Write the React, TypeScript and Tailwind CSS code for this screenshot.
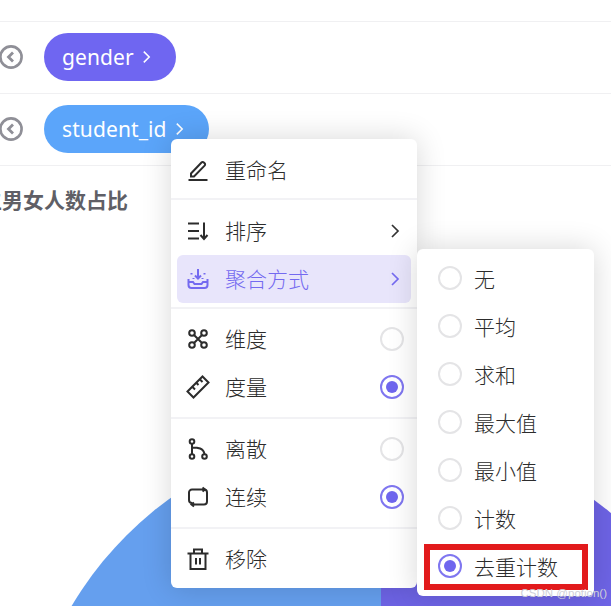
import { ReactNode } from "react";

const cjk = "font-['Noto_Sans_CJK_SC',sans-serif]";

const icons: Record<string, ReactNode> = {
  rename: (
    <>
      <path d="M5 15.500 15.500 4.500a1.600 1.600 0 0 1 2.300 0l.8.8a1.600 1.600 0 0 1 0 2.300L8 18.500H5z" />
      <path d="M2.500 22h19" />
    </>
  ),
  sort: (
    <>
      <path d="M2 4.500h11M2 12h11M2 19.500h11" />
      <path d="M18 3.500v16M14.500 16l3.500 4 3.500-4" />
    </>
  ),
  agg: (
    <>
      <path d="M12 2v9.500M9 8.500l3 3 3-3" />
      <path d="M5.500 6v1.500M18.500 6v1.500M7.500 11v1M16.500 11v1" />
      <path d="M2.500 12v6a3 3 0 0 0 3 3h13a3 3 0 0 0 3-3v-6" />
      <path d="M2.500 15H7l1.500 2h7L17 15h4.500" />
    </>
  ),
  dim: (
    <>
      <circle cx="6" cy="6" r="2.800" />
      <circle cx="18" cy="6" r="2.800" />
      <circle cx="6" cy="18" r="2.800" />
      <circle cx="18" cy="18" r="2.800" />
      <path d="M8 8 16 16M16 8 8 16" />
    </>
  ),
  measure: (
    <>
      <path d="M1.500 16.500 16.500 1.500 22.500 7.500 7.500 22.500z" />
      <path d="M6.500 12l2.500 2.500M10.500 8l2 2M14 4.500l2.500 2.500" />
    </>
  ),
  discrete: (
    <>
      <circle cx="6" cy="4.500" r="2.300" />
      <circle cx="6" cy="19.500" r="2.300" />
      <circle cx="18.500" cy="19.500" r="2.300" />
      <path d="M6 6.800v10.400M6 10.500c6 0 11.500.5 12.500 6.700" />
    </>
  ),
  continuous: (
    <>
      <path d="M18 4.500H6a3 3 0 0 0-3 3v7.500a3 3 0 0 0 3 3h.5" />
      <path d="M6.500 19.500H18a3 3 0 0 0 3-3V7.500a3 3 0 0 0-3-3" />
      <path d="M16.500 2.500 19 4.500l-2.500 2M8 17.500l-2.500 2 2.500 2" />
    </>
  ),
  remove: (
    <>
      <path d="M1.500 6.500h21M8 6.500V2.500h8v4" />
      <path d="M4.500 6.500V22h15V6.500" />
      <path d="M10 11v6.500M14 11v6.500" />
    </>
  ),
};

function MenuIcon({ name }: { name: string }) {
  return (
    <svg
      viewBox="0 0 24 24"
      fill="none"
      stroke="currentColor"
      strokeWidth="2"
      className="w-6 h-6 shrink-0 -ml-px"
    >
      {icons[name]}
    </svg>
  );
}

function Radio({ checked }: { checked?: boolean }) {
  return (
    <span
      className={
        checked
          ? "flex items-center justify-center w-6 h-6 rounded-full border-2 border-[#7f76f0] bg-white shrink-0"
          : "block w-6 h-6 rounded-full border-2 border-[#e4e4e6] bg-white shrink-0"
      }
    >
      {checked && <span className="w-3 h-3 rounded-full bg-[#6f66ee]" />}
    </span>
  );
}

function Chevron({ className }: { className: string }) {
  return (
    <svg viewBox="0 0 10 16" fill="none" stroke="currentColor" strokeWidth="1.700" className={className}>
      <path d="M2 2l6 6-6 6" />
    </svg>
  );
}

function MenuRow({
  icon,
  label,
  arrow,
  radio,
  active,
}: {
  icon: string;
  label: string;
  arrow?: boolean;
  radio?: "on" | "off";
  active?: boolean;
}) {
  return (
    <div
      className={`h-12 mx-[6px] pl-[10px] pr-[7px] rounded-md flex items-center gap-[15px] ${
        active ? "bg-[#e8e5fb] text-[#746af0]" : "text-[#2c2c2c]"
      }`}
    >
      <MenuIcon name={icon} />
      <span className="flex-1 text-[21px] leading-none pb-[2px] font-light">{label}</span>
      {arrow && <Chevron className={`w-[10px] h-4 mr-[4px] ${active ? "text-[#746af0]" : "text-[#333]"}`} />}
      {radio && <Radio checked={radio === "on"} />}
    </div>
  );
}

function FieldRow({ label, color }: { label: string; color: string }) {
  return (
    <div className="h-[72px] pb-px border-t border-[#f0f0f2] flex items-center gap-[21px] -ml-px">
      <svg viewBox="0 0 24 24" fill="none" className="w-6 h-6 text-[#8f8f97]" stroke="currentColor">
        <circle cx="12" cy="12" r="10.600" strokeWidth="2.600" />
        <path d="M14 7.500 9.500 12l4.500 4.500" strokeWidth="2.800" />
      </svg>
      <div
        className={`h-12 pl-[18px] pr-[25px] rounded-3xl flex items-center gap-[8px] text-white text-[21px] font-['Noto_Sans',sans-serif] ${color}`}
      >
        <span className="pt-[2px] tracking-[0.1px]">{label}</span>
        <Chevron className="w-[9px] h-4 text-white" />
      </div>
    </div>
  );
}

const aggregates = ["无", "平均", "求和", "最大值", "最小值", "计数", "去重计数"];

export default function App() {
  return (
    <div className={`relative w-[611px] h-[606px] overflow-hidden bg-white ${cjk}`}>
      <div className="pt-[21px]">
        <FieldRow label="gender" color="bg-[#6f66f1]" />
        <FieldRow label="student_id" color="bg-[#5ba5fa]" />
        <div className="border-t border-[#f0f0f2] pt-[17px] -ml-[19px] text-[21px] leading-[32px] font-bold text-[#5f5f66]">
          生男女人数占比
        </div>
      </div>

      {/* pie chart, only its top shows */}
      <svg viewBox="0 0 611 606" className="absolute inset-0 w-[611px] h-[606px]">
        <path d="M381 430A360 360 0 0 0 21 790H381z" fill="#659fee" />
        <path d="M381 430A360 360 0 0 1 741 790H381z" fill="#6e64e6" />
      </svg>

      {/* context menu */}
      <div className="absolute left-[171px] top-[139px] w-[246px] bg-white rounded-md shadow-[0_0_30px_rgba(0,0,0,0.16)]">
        <div className="pt-[7px] pb-[4px]">
          <MenuRow icon="rename" label="重命名" />
        </div>
        <div className="border-t-2 border-[#f2f2f5] pt-[7px] pb-[4px]">
          <MenuRow icon="sort" label="排序" arrow />
          <MenuRow icon="agg" label="聚合方式" arrow active />
        </div>
        <div className="border-t-2 border-[#f2f2f5] pt-[6px] pb-[6px]">
          <MenuRow icon="dim" label="维度" radio="off" />
          <MenuRow icon="measure" label="度量" radio="on" />
        </div>
        <div className="border-t-2 border-[#f2f2f5] pt-[6px] pb-[6px]">
          <MenuRow icon="discrete" label="离散" radio="off" />
          <MenuRow icon="continuous" label="连续" radio="on" />
        </div>
        <div className="border-t-2 border-[#f2f2f5] pt-[6px] pb-[5px]">
          <MenuRow icon="remove" label="移除" />
        </div>
      </div>

      {/* aggregate submenu */}
      <div className="absolute left-[417px] top-[249px] w-[177px] pt-[5px] pb-[6px] bg-white rounded-md shadow-[0_0_30px_rgba(0,0,0,0.16)]">
        {aggregates.map((name, i) => (
          <div key={name} className="h-12 pl-[21px] flex items-center gap-3 text-[21px] leading-none text-[#2c2c2c]">
            <Radio checked={i === aggregates.length - 1} />
            <span className="font-light">{name}</span>
          </div>
        ))}
      </div>

      {/* annotation box on top of the screenshot */}
      <div className="absolute left-[424px] top-[544px] w-[164px] h-[46px] border-[6px] border-[#e21a1c]" />
      <span className="absolute right-[4px] bottom-[5px] text-[11.500px] leading-[16px] text-[#d0d0d8] font-['Liberation_Sans',sans-serif]">
        CSDN @potion()
      </span>
    </div>
  );
}
